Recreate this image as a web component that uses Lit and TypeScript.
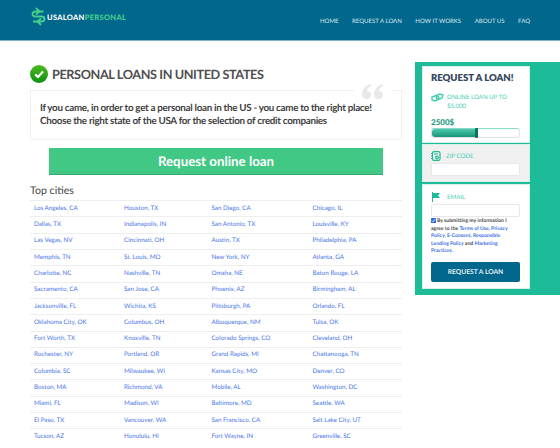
import { LitElement, html, css } from "lit";
import { customElement } from "lit/decorators.js";

const cities = [
  ["Los Angeles, CA", "Houston, TX", "San Diego, CA", "Chicago, IL"],
  ["Dallas, TX", "Indianapolis, IN", "San Antonio, TX", "Louisville, KY"],
  ["Las Vegas, NV", "Cincinnati, OH", "Austin, TX", "Philadelphia, PA"],
  ["Memphis, TN", "St. Louis, MO", "New York, NY", "Atlanta, GA"],
  ["Charlotte, NC", "Nashville, TN", "Omaha, NE", "Baton Rouge, LA"],
  ["Sacramento, CA", "San Jose, CA", "Phoenix, AZ", "Birmingham, AL"],
  ["Jacksonville, FL", "Wichita, KS", "Pittsburgh, PA", "Orlando, FL"],
  ["Oklahoma City, OK", "Columbus, OH", "Albuquerque, NM", "Tulsa, OK"],
  ["Fort Worth, TX", "Knoxville, TN", "Colorado Springs, CO", "Cleveland, OH"],
  ["Rochester, NY", "Portland, OR", "Grand Rapids, MI", "Chattanooga, TN"],
  ["Columbia, SC", "Milwaukee, WI", "Kansas City, MO", "Denver, CO"],
  ["Boston, MA", "Richmond, VA", "Mobile, AL", "Washington, DC"],
  ["Miami, FL", "Madison, WI", "Baltimore, MD", "Seattle, WA"],
  ["El Paso, TX", "Vancouver, WA", "San Francisco, CA", "Salt Lake City, UT"],
  ["Tucson, AZ", "Honolulu, HI", "Fort Wayne, IN", "Greenville, SC"],
];

@customElement("app-root")
export class AppRoot extends LitElement {
  static styles = css`
    :host { display: block; width: 560px; height: 448px; overflow: hidden; background: #fff; font-family: Lato, "Open Sans", sans-serif; color: #444; text-rendering: geometricPrecision; }
    * { box-sizing: border-box; }
    header { height: 41px; background: #01678c; border-bottom: 1px solid #7fb3c6; display: flex; justify-content: space-between; padding: 6px 30px 0 31px; }
    .logo { display: flex; align-items: center; height: 21px; gap: 1px; font-size: 7.5px; font-weight: 900; letter-spacing: 0.3px; color: #fff; }
    .logo span { padding-top: 2px; }
    .logo b { color: #45d08c; font-weight: 900; }
    nav { display: flex; gap: 13.5px; padding-top: 11px; font-size: 6.05px; color: #d4e6ed; line-height: 9px; }
    .main { display: flex; align-items: flex-start; padding-top: 21px; }
    .left { width: 372px; margin-left: 30px; }
    .title { display: flex; align-items: center; gap: 4px; height: 24px; font-size: 12.7px; font-weight: 700; color: #4f4f4f; letter-spacing: -0.4px; }
    .quote { position: relative; margin-top: 4px; height: 50px; border: 1px solid #f0f0f0; padding: 10.500px 9px 0; font-size: 9.8px; font-weight: 700; line-height: 13.3px; color: #3f3f3f; letter-spacing: -0.28px; white-space: nowrap; }
    .mark { position: absolute; right: 9px; top: -7px; width: 38px; height: 18px; background: #fff; display: flex; justify-content: center; }
    .cta { margin: 8px 19px 0; height: 27px; background: #41c884; border-bottom: 1px solid #38a970; color: #fff; font-size: 13.3px; font-weight: 700; display: flex; align-items: center; justify-content: center; }
    h2 { margin: 9px 0 2px; font-size: 10.6px; font-weight: 400; line-height: 14px; color: #444; }
    .row { display: grid; grid-template-columns: 90px 87.5px 101px 1fr; height: 16.32px; border-top: 1px solid #eee; padding-left: 4px; font-size: 6.25px; color: #4a76e8; align-items: center; line-height: 14px; }
    aside { width: 145px; height: 233px; margin-left: 13px; background: #1dbb98; padding: 4px 0 0 7px; flex: none; }
    .panel { width: 108px; background: #fff; padding: 5px 9px 0 8px; border: 1px solid #d8f0ea; }
    .p1 { height: 77px; }
    .p2 { height: 38px; margin-top: 1px; background: #f0f0f0; padding-top: 6px; }
    .p3 { height: 105px; margin-top: 2px; padding-top: 7px; }
    .rq { font-size: 9.6px; font-weight: 800; color: #36475f; line-height: 13px; letter-spacing: -0.05px; white-space: nowrap; }
    .lbl { display: flex; align-items: flex-start; gap: 3px; font-size: 6.1px; color: #45cdb0; line-height: 9px; white-space: nowrap; }
    .lbl svg { flex: none; }
    .lbl1 { margin-top: 8px; }
    .lbl2 { height: 10px; align-items: center; margin-bottom: 2px; }
    .amt { font-size: 8px; font-weight: 900; color: #1f9c80; line-height: 9px; margin-top: 7px; }
    .slider { position: relative; height: 10px; margin-top: 1px; border: 1px solid #e3e3e3; border-top-color: #8adcc8; border-radius: 3px; background: #fff; }
    .fill { height: 100%; width: 50%; background: linear-gradient(#4fc9ad, #159478); border-radius: 3px 0 0 3px; }
    .thumb { position: absolute; left: calc(50% - 1px); top: -1px; width: 3px; height: 10px; background: #0f6f60; border-radius: 1px; }
    .input { height: 13px; background: #fff; border: 1px solid #e8e8e8; border-radius: 2px; }
    .agree { font-size: 5.1px; line-height: 7.500px; font-weight: 700; color: #444; margin-top: 1px; white-space: nowrap; }
    .agree a { color: #3a6fe0; }
    .check { display: inline-flex; vertical-align: -1px; width: 5px; height: 5px; margin-right: 1px; }
    .btn { margin-top: 6px; height: 20px; border-radius: 2px; background: #01678c; color: #e6f1f5; font-size: 6.7px; font-weight: 700; display: flex; align-items: center; justify-content: center; }
    .ml4 { margin-left: 2px; }
    .ml5 { margin-left: 3px; }
  `;

  render() {
    return html`
      <header>
        <div class="logo">
          <svg width="15" height="19" viewBox="0 0 15 19" fill="none" stroke="#45d08c" stroke-width="1.8">
            <path d="M12.500 4.500 H4.500 Q1.500 4.500 1.500 7 Q1.500 9.500 4.500 9.500 H10.500 Q13.500 9.500 13.500 12 Q13.500 14.500 10.500 14.500 H2" />
            <path d="M5 1 L8.500 4.500 L5 7.500 M10 11.500 L6.500 14.500 L10 18" />
          </svg>
          <span>USALOAN<b>PERSONAL</b></span>
        </div>
        <nav><span>HOME</span><span>REQUEST A LOAN</span><span>HOW IT WORKS</span><span>ABOUT US</span><span>FAQ</span></nav>
      </header>
      <div class="main">
        <div class="left">
          <div class="title">
            <svg width="18" height="18" viewBox="0 0 18 18">
              <defs><linearGradient id="g" x1="0" y1="0" x2="0" y2="1"><stop offset="0" stop-color="#4dbb22"/><stop offset="1" stop-color="#0c8f10"/></linearGradient></defs>
              <circle cx="9" cy="9" r="9" fill="url(#g)"/>
              <path d="M5.2 9.4 L8 12 L13 6.6" fill="none" stroke="#fff" stroke-width="2.2"/>
            </svg>
            <span>PERSONAL LOANS IN UNITED STATES</span>
          </div>
          <div class="quote">
            <div class="mark"><svg width="22" height="16" viewBox="0 0 22 16" fill="#e8e8e8"><path d="M9 0 C4 1 0 5 0 10 Q0 15 4.500 15 Q9 15 9 11 Q9 7 5 7 Q5 4 9 2Z M21 0 C16 1 12 5 12 10 Q12 15 16.500 15 Q21 15 21 11 Q21 7 17 7 Q17 4 21 2Z"/></svg></div>
            If you came, in order to get a personal loan in the US - you came to the right place!<br>Choose the right state of the USA for the selection of credit companies
          </div>
          <div class="cta">Request online loan</div>
          <h2>Top cities</h2>
          ${cities.map((r) => html`<div class="row">${r.map((c) => html`<span>${c}</span>`)}</div>`)}
        </div>
        <aside>
          <div class="panel p1">
            <div class="rq">REQUEST A LOAN!</div>
            <div class="lbl lbl1">
              <svg width="13" height="9" viewBox="0 0 13 9" fill="none" stroke="#45cdb0" stroke-width="1.4"><path d="M1 4 L9 1 L12 2 L11 5 L4 8 L1 7Z"/><circle cx="6.500" cy="4.500" r="1.300"/></svg>
              <span>ONLINE LOAN UP TO<br>$5,000</span>
            </div>
            <div class="amt">2500$</div>
            <div class="slider"><div class="fill"></div><div class="thumb"></div></div>
          </div>
          <div class="panel p2">
            <div class="lbl lbl2">
              <svg width="10" height="10" viewBox="0 0 10 10" fill="none" stroke="#1dbb98" stroke-width="1.200"><rect x="1.500" y="0.600" width="7.500" height="8.800" rx="1.500"/><circle cx="6" cy="6.500" r="1.300"/><path d="M3 3 H7 M0 2.500 H2 M0 5 H2 M0 7.500 H2"/></svg>
              <span class="ml4">ZIP CODE</span>
            </div>
            <div class="input"></div>
          </div>
          <div class="panel p3">
            <div class="lbl lbl2">
              <svg width="10" height="10" viewBox="0 0 10 10"><path d="M1 0 H2 V10 H1Z M2 1 L9 1 L7 3.500 L9 6 L2 6Z" fill="#1dbb98"/></svg>
              <span class="ml5">EMAIL</span>
            </div>
            <div class="input"></div>
            <div class="agree"><svg class="check" viewBox="0 0 5 5"><rect width="5" height="5" rx=".6" fill="#2a6fd8"/><path d="M1 2.500 L2.200 3.700 L4 1.200" fill="none" stroke="#fff" stroke-width=".8"/></svg>By submitting my information I<br>agree to the <a>Terms of Use, Privacy<br>Policy, E-Consent, Responsible<br>Lending Policy</a> and <a>Marketing<br>Practices.</a></div>
            <div class="btn">REQUEST A LOAN</div>
          </div>
        </aside>
      </div>
    `;
  }
}
